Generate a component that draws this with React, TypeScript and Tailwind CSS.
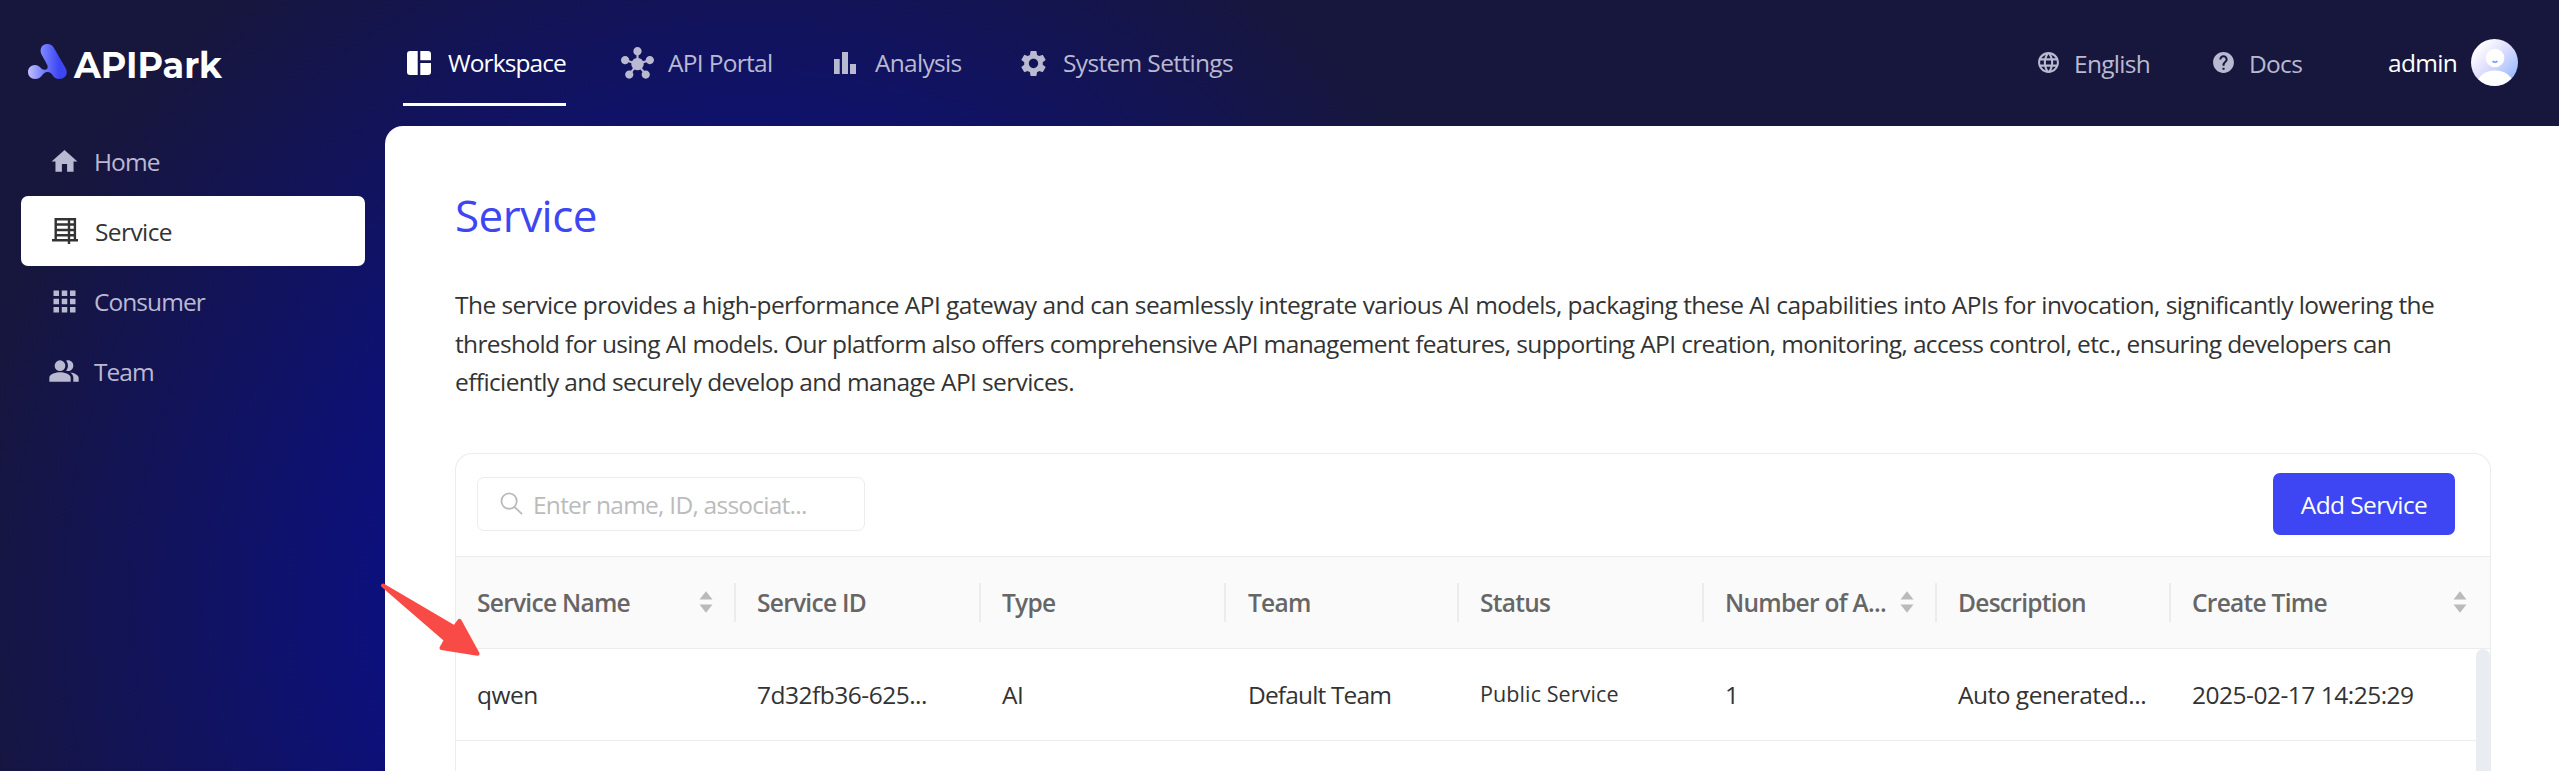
import React from 'react';
import {
  MdHome, MdApps, MdPeopleAlt, MdHub, MdSettings, MdLanguage, MdHelp,
} from 'react-icons/md';

type IconProps = { className?: string };

const Logo = () => (
  <div className="flex items-start pt-[3px]">
    <svg className="h-[36px] w-[40px]" viewBox="0 0 40 36">
      <defs>
        <linearGradient id="lg" x1="0" y1="0" x2="1" y2="0">
          <stop offset="0" stopColor="#c3bfff" />
          <stop offset="0.35" stopColor="#7d86ff" />
          <stop offset="0.8" stopColor="#3d46f2" />
        </linearGradient>
      </defs>
      <path
        fill="url(#lg)"
        d="M13 9.500C11.500 4 14.500 0 19.500 0C22.500 0 24.500 1.500 26 4L37.800 24.500C40.500 30 37 35 31.500 35C28 35 26 33.500 24.500 31C23 28.500 20.500 27.500 17.500 28.500C14 29.600 13.500 35 7 35C3 35 0 32 0 28C0 24 3 21 7 21C12 21 12.500 25.500 16.500 25.800C19.500 26 20.300 23.500 19.300 21Z"
      />
    </svg>
    <span className="ml-[6px] origin-left scale-x-[0.945] pt-[1px] font-[Montserrat,'Open_Sans',sans-serif] text-[37px] leading-[40px] font-bold tracking-[0px] text-white">APIPark</span>
  </div>
);

const WorkspaceIcon = ({ className }: IconProps) => (
  <svg className={className} viewBox="0 0 24 24" fill="currentColor">
    <path d="M3 0h7.700v24H3a3 3 0 0 1-3-3V3a3 3 0 0 1 3-3zM13.300 0H21a3 3 0 0 1 3 3v6.300H13.300zM13.300 12H24v9a3 3 0 0 1-3 3h-7.700z" />
  </svg>
);

const BarsIcon = ({ className }: IconProps) => (
  <svg className={className} viewBox="0 0 22 22" fill="currentColor">
    <path d="M0 7h5.700v15H0zM8 0h6v22H8zM16 12h6v10h-6z" />
  </svg>
);

const ServiceIcon = ({ className }: IconProps) => (
  <svg className={className} viewBox="0 0 26 26" fill="none" stroke="currentColor" strokeWidth="2.400">
    <path d="M3.700 22V1.200h19.200V22M0 22.300h26M4 6.500h19M4 12h19M4 17.300h19M17 1v25" />
  </svg>
);

const SearchIcon = ({ className }: IconProps) => (
  <svg className={className} viewBox="0 0 24 24" fill="none" stroke="currentColor" strokeWidth="1.900">
    <circle cx="9.500" cy="9.500" r="8" />
    <path d="M15 15.500L23 23" />
  </svg>
);

const Sorter = () => (
  <svg className="h-[22px] w-[14px] shrink-0 text-[#bababa]" viewBox="0 0 14 22" fill="currentColor">
    <path d="M7 0.300L13.500 8.500H0.500zM7 21.700L0.500 13.500h13z" />
  </svg>
);

const Avatar = () => (
  <svg className="mb-[2px] h-[47px] w-[47px]" viewBox="0 0 47 47">
    <defs>
      <linearGradient id="av" x1="0" y1="0" x2="1" y2="1">
        <stop offset="0.150" stopColor="#ffffff" />
        <stop offset="0.450" stopColor="#e0e0fd" />
        <stop offset="0.850" stopColor="#9dbcff" />
      </linearGradient>
      <clipPath id="avc"><circle cx="23.500" cy="23.500" r="23.500" /></clipPath>
    </defs>
    <g clipPath="url(#avc)">
      <rect width="47" height="47" fill="url(#av)" />
      <circle cx="24" cy="19" r="9.300" fill="#fff" />
      <ellipse cx="24" cy="46" rx="18.500" ry="14.500" fill="#fff" />
      <path d="M21.500 22.200q2.500 2 5 0" stroke="#6f9cff" strokeWidth="1.500" fill="none" />
    </g>
  </svg>
);

const Arrow = () => (
  <svg className="absolute top-[580px] left-[378px] h-[80px] w-[106px]" viewBox="378 580 106 80">
    <path
      fill="#f94b46"
      stroke="#f94b46"
      strokeWidth="4"
      strokeLinejoin="round"
      d="M383 585.500L454.500 627.500L459.500 620.800L477.600 653.800L441.500 648L446 640Z"
    />
  </svg>
);

const columns = [
  { title: 'Service Name', value: 'qwen', cell: 'w-[280px] pl-[21px]', sort: true },
  { title: 'Service ID', value: '7d32fb36-625...', cell: 'w-[245px] pl-[21px]' },
  { title: 'Type', value: 'AI', cell: 'w-[245px] pl-[21px]' },
  { title: 'Team', value: 'Default Team', cell: 'w-[233px] pl-[22px]', tight: true },
  { title: 'Status', value: 'Public Service', cell: 'w-[245px] pl-[21px]', small: true },
  { title: 'Number of A...', value: '1', cell: 'w-[233px] pl-[21px]', sort: true },
  { title: 'Description', value: 'Auto generated...', cell: 'w-[234px] pl-[21px]' },
  { title: 'Create Time', value: '2025-02-17 14:25:29', cell: 'flex-1 pl-[21px]', sort: true, last: true },
];

const cellText = (c: { small?: boolean; tight?: boolean }) => {
  if (c.small) return 'pt-[1px] text-[21.500px] tracking-[0.1px] whitespace-nowrap';
  if (c.tight) return 'pt-[2px] tracking-[-0.85px] whitespace-nowrap';
  return 'pt-[2px] tracking-[-0.5px] whitespace-nowrap';
};

const menu = [
  { label: 'Home', icon: <MdHome className="size-[31px]" /> },
  { label: 'Service', icon: <ServiceIcon className="ml-[2px] h-[26px] w-[26px]" />, active: true },
  { label: 'Consumer', icon: <MdApps className="size-[33px]" /> },
  { label: 'Team', icon: <MdPeopleAlt className="size-[32px]" /> },
];

export default function App() {
  return (
    <div className="relative flex h-[771px] w-[2559px] flex-col overflow-hidden bg-[#17163d] bg-[radial-gradient(circle_at_750px_610px,#0c107c_0px,#0c107c_365px,#17163d_800px)] font-['Open_Sans','Noto_Sans',sans-serif] text-[24.5px] tracking-[-0.7px]">
      <header className="flex h-[126px] shrink-0 items-center pr-[41px] pl-[28px] text-[#b9b9d1]">
        <div className="w-[375px]"><Logo /></div>
        <nav className="flex h-full items-center">
          <div className="flex h-full w-[163px] flex-col justify-between pt-[44px] pb-[20px] text-white">
            <div className="flex items-center gap-[17px] pl-[4px]">
              <WorkspaceIcon className="size-[24px]" />
              <span className="leading-[38px] tracking-[-0.9px]">Workspace</span>
            </div>
            <div className="h-[3px] bg-white" />
          </div>
          <div className="ml-[55px] flex w-[152px] items-center gap-[14px]"><MdHub className="size-[33px] shrink-0" /><span className="whitespace-nowrap">API Portal</span></div>
          <div className="ml-[61px] flex w-[128px] items-center gap-[19px]"><BarsIcon className="size-[22px] shrink-0" /><span>Analysis</span></div>
          <div className="ml-[56px] flex items-center gap-[14px]"><MdSettings className="size-[31px] shrink-0" /><span className="tracking-[-0.65px] whitespace-nowrap">System Settings</span></div>
        </nav>
        <div className="ml-auto flex items-center">
          <div className="flex w-[175px] items-center gap-[13px]"><MdLanguage className="mb-[2px] size-[25px]" /><span className="pt-[2px]">English</span></div>
          <div className="flex w-[177px] items-center gap-[13px]"><MdHelp className="mb-[2px] size-[25px]" /><span className="pt-[2px]">Docs</span></div>
          <span className="w-[83px] text-white">admin</span>
          <Avatar />
        </div>
      </header>
      <div className="flex min-h-0 flex-1">
        <aside className="flex w-[385px] shrink-0 flex-col pr-[20px] pl-[21px] text-[#b9b9d1]">
          {menu.map((m) => (
            <div key={m.label} className={m.active ? 'flex h-[70px] items-center rounded-[7px] bg-white text-[#333]' : 'flex h-[70px] items-center'}>
              <span className="ml-[25px] flex w-[36px] justify-center">{m.icon}</span>
              <span className={m.active ? 'ml-[13px] pt-[2px] tracking-[-0.6px]' : 'ml-[12px] pt-[2px] tracking-[-0.95px]'}>{m.label}</span>
            </div>
          ))}
        </aside>
        <main className="flex flex-1 flex-col rounded-tl-[18px] bg-white pr-[68px] pl-[70px] text-[#333]">
          <h1 className="pt-[56px] text-[44px] leading-[66px] tracking-[-0.55px] text-[#3d46f2]">Service</h1>
          <p className="mt-[38px] flex flex-col leading-[38.500px] whitespace-nowrap">
            <span className="tracking-[-0.545px]">The service provides a high-performance API gateway and can seamlessly integrate various AI models, packaging these AI capabilities into APIs for invocation, significantly lowering the</span>
            <span className="tracking-[-0.64px]">threshold for using AI models. Our platform also offers comprehensive API management features, supporting API creation, monitoring, access control, etc., ensuring developers can</span>
            <span className="tracking-[-0.61px]">efficiently and securely develop and manage API services.</span>
          </p>
          <section className="mt-[51px] flex flex-1 flex-col rounded-t-[17px] border border-b-0 border-[#ececec]">
            <div className="flex h-[102px] items-center justify-between pr-[35px] pl-[21px]">
              <div className="mb-[1px] flex h-[54px] w-[388px] items-center rounded-[7px] border border-[#ececec] pl-[22px] text-[#bbb]">
                <SearchIcon className="mb-[1px] h-[23px] w-[23px]" />
                <span className="ml-[10px] pt-[2px] tracking-[-0.75px]">Enter name, ID, associat...</span>
              </div>
              <button className="mb-[1px] h-[62px] w-[182px] rounded-[7px] bg-[#3d46f2] pt-[3px] tracking-[-0.6px] text-white">Add Service</button>
            </div>
            <div className="flex h-[93px] border-y border-[#ececec] bg-[#fafafa] font-semibold text-[#666]">
              {columns.map((c) => (
                <div key={c.title} className={`${c.cell} flex items-center`}>
                  <span className="pt-[3px] tracking-[-0.72px] whitespace-nowrap">{c.title}</span>
                  <div className={c.last ? 'mr-[23px] ml-auto flex' : 'ml-auto flex items-center'}>
                    {c.sort && <Sorter />}
                    {!c.last && <div className={c.sort ? 'ml-[21px] h-[39px] w-[2px] bg-[#ececec]' : 'h-[39px] w-[2px] bg-[#ececec]'} />}
                  </div>
                </div>
              ))}
            </div>
            <div className="flex flex-1">
              <div className="flex-1">
                <div className="flex h-[92px] border-b border-[#ececec]">
                  {columns.map((c) => (
                    <div key={c.title} className={`${c.cell} flex items-center`}>
                      <span className={cellText(c)}>{c.value}</span>
                    </div>
                  ))}
                </div>
              </div>
              <div className="w-[14px] rounded-t-[7px] bg-[#e9edf2]" />
            </div>
          </section>
        </main>
      </div>
      <Arrow />
    </div>
  );
}
